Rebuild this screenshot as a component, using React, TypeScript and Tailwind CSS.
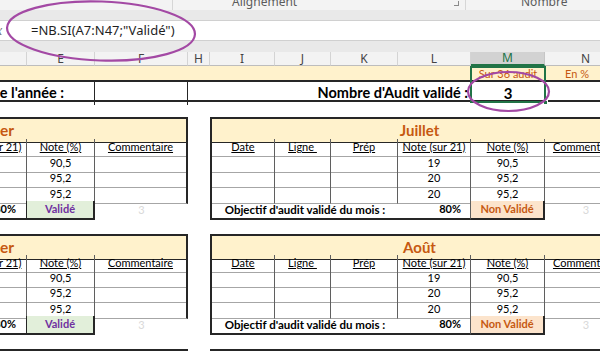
import React from "react";

const COLS =
  "grid grid-cols-[73px_68px_93px_22px_65px_56px_67px_73px_74px_82px]";
const CELL = "font-['Lato',sans-serif] text-[11px] text-black";
const UI = "font-['Noto_Sans',sans-serif]";

const values = [
  { e: "90,5", l: "19", m: "90,5", h: "h-[15px]" },
  { e: "95,2", l: "20", m: "95,2", h: "h-[16px]" },
  { e: "95,2", l: "20", m: "95,2", h: "h-[15px]" },
];

const td =
  "flex items-center justify-center border-r border-b border-r-[#5f5f5f] border-b-[#a6a6a6]";

const Block: React.FC<{
  left: string;
  right: string;
  titleH: string;
  headH: string;
}> = ({ left, right, titleH, headH }) => (
  <div>
    <div className={`${COLS} ${titleH}`}>
      <div className="col-span-3 flex items-center border-t-2 border-r-2 border-b border-[#262626] bg-[#fff2cc]">
        <div className="w-[60px] shrink-0 text-right text-[15.5px] font-bold text-[#c65911] whitespace-nowrap">
          {left}
        </div>
      </div>
      <div />
      <div className="col-span-6 flex items-center justify-center border-t-2 border-l-2 border-b border-[#262626] bg-[#fff2cc] text-[15px] font-bold text-[#c65911]">
        {right}
      </div>
    </div>

    <div className={`${COLS} ${headH}`}>
      <div className={`${td} underline`}>Note (sur 21)</div>
      <div className={`${td} underline`}>Note (%)</div>
      <div className={`${td} underline border-r-2 border-r-[#262626]`}>Commentaire</div>
      <div />
      <div className={`${td} underline border-l-2 border-l-[#262626]`}>Date</div>
      <div className={`${td} underline`}>Ligne&nbsp;</div>
      <div className={`${td} underline`}>Prép</div>
      <div className={`${td} underline`}>Note (sur 21)</div>
      <div className={`${td} underline`}>Note (%)</div>
      <div className={`${td} underline whitespace-nowrap`}>Commentaire</div>
    </div>

    {values.map((v, i) => (
      <div key={i} className={`${COLS} ${v.h}`}>
        <div className={td} />
        <div className={td}>{v.e}</div>
        <div className={`${td} border-r-2 border-r-[#262626]`} />
        <div />
        <div className={`${td} border-l-2 border-l-[#262626]`} />
        <div className={td} />
        <div className={td} />
        <div className={td}>{v.l}</div>
        <div className={td}>{v.m}</div>
        <div className={td} />
      </div>
    ))}

    <div className={`${COLS} h-[15px]`}>
      <div className="flex items-center justify-end pr-[10px] font-bold border-b-2 border-r border-[#262626]">
        80%
      </div>
      <div className="flex items-center justify-center bg-[#e2efda] text-[#7030a0] font-bold border-b-2 border-r-2 border-[#262626]">
        Validé
      </div>
      <div className="flex items-center justify-center text-[#d9d9d9]">3</div>
      <div />
      <div className="col-span-3 flex items-center justify-center text-[11.5px] font-bold border-l-2 border-b-2 border-[#262626] whitespace-nowrap">
        Objectif d'audit validé du mois :
      </div>
      <div className="flex items-center justify-end pr-[9px] font-bold border-b-2 border-r border-b-[#262626] border-r-[#5f5f5f]">
        80%
      </div>
      <div className="flex items-center justify-center bg-[#fce4cc] text-[#c65911] font-bold border-b-2 border-r-2 border-[#262626]">
        Non Validé
      </div>
      <div className="flex items-center justify-center text-[#d9d9d9]">3</div>
    </div>
  </div>
);

const headers = ["D", "E", "F", "H", "I", "J", "K", "L", "M", "N"];

export default function App() {
  return (
    <div className="relative w-[600px] h-[351px] overflow-hidden bg-white">
      {/* ribbon group labels */}
      <div className={`${UI} flex h-[10px] overflow-hidden bg-[#f3f3f3] text-[12px] leading-[12px] text-[#5b5b5b]`}>
        <div className="w-[173px] shrink-0 border-r border-[#d6d6d6]" />
        <div className="flex w-[293px] shrink-0 border-r border-[#d6d6d6]">
          <span className="mt-[-4px] ml-[59px]">Alignement</span>
          <span className="ml-auto mr-[6px] mt-[1px] h-[5px] w-[5px] border-b border-r border-[#8a8a8a]" />
        </div>
        <span className="mt-[-4px] ml-[55px]">Nombre</span>
      </div>
      <div className="h-[10px] bg-[#e9e9e9]" />

      {/* formula bar */}
      <div className={`${UI} flex h-[21px] items-center border-y border-[#d0d0d0] bg-white`}>
        <span className="ml-[-8px] w-[39px] shrink-0 italic text-[14px] text-[#6f6f6f] font-['Liberation_Serif',serif]">
          fx
        </span>
        <span className="text-[13px] text-[#1f1f1f]">=NB.SI(A7:N47;"Validé")</span>
      </div>
      <div className="h-[11px] bg-[#e9e9e9]" />

      {/* column headers */}
      <div className="h-[14px] overflow-hidden bg-[#f3f3f3]">
        <div className={`${COLS} ${UI} ml-[-46px] w-[673px] h-[14px] text-[12px] leading-none text-[#444]`}>
          {headers.map((h) => (
            <div
              key={h}
              className={
                h === "M"
                  ? "flex items-center justify-center border-r border-b-2 border-r-[#c6c6c6] border-b-[#217346] bg-[#d2d2d2] text-[#217346]"
                  : "flex items-center justify-center border-r border-b border-r-[#d4d4d4] border-b-[#bdbdbd]"
              }
            >
              {h}
            </div>
          ))}
        </div>
      </div>

      {/* sheet */}
      <div className="h-[285px] overflow-hidden">
        <div className={`${CELL} ml-[-46px] w-[673px]`}>
          <div className={`${COLS} h-[14px] bg-[#fff2cc] text-[#c65911]`}>
            <div className="col-span-8" />
            <div className="flex items-center justify-center whitespace-nowrap">Sur 36 audit</div>
            <div className="flex items-center justify-center pr-[18px]">En %</div>
          </div>

          <div className={`${COLS} h-[22px] border-y-2 border-[#262626] text-[14.5px] font-bold`}>
            <div className="col-span-2 flex items-center justify-end pr-[30px] whitespace-nowrap border-r border-[#262626]">
              Nombre d'audit de l'année :
            </div>
            <div className="border-r border-[#262626]" />
            <div className="col-span-5 flex items-center justify-end pr-[3px] whitespace-nowrap">
              Nombre d'Audit validé :
            </div>
            <div className="flex items-center justify-center text-[15px]">3</div>
            <div className="border-l border-[#262626]" />
          </div>

          <div className="h-[15px]" />
          <Block left="Janvier" right="Juillet" titleH="h-[22px]" headH="h-[16px]" />
          <div className="h-[18px]" />
          <Block left="Février" right="Août" titleH="h-[21px]" headH="h-[15px]" />
          <div className="h-[18px]" />
          <div className={`${COLS} h-[20px]`}>
            <div className="col-span-3 border-t-2 border-r-2 border-[#262626] bg-[#fff2cc]" />
            <div />
            <div className="col-span-6 border-t-2 border-l-2 border-[#262626] bg-[#fff2cc]" />
          </div>
        </div>
      </div>

      {/* active selection */}
      <div className="pointer-events-none absolute left-[470px] top-[66px] h-[37px] w-[76px] border-2 border-[#217346]">
        <div className="absolute -bottom-[4px] -right-[4px] h-[5px] w-[5px] border border-white bg-[#217346]" />
      </div>

      {/* hand-drawn highlights */}
      <svg className="pointer-events-none absolute inset-0" width="600" height="351">
        <ellipse cx="101" cy="31" rx="94" ry="29.5" fill="none" stroke="#a349a4" strokeWidth="2.2" transform="rotate(2 101 31)" />
        <ellipse cx="508.5" cy="91.5" rx="40.5" ry="19.5" fill="none" stroke="#a349a4" strokeWidth="2.2" />
      </svg>
    </div>
  );
}
